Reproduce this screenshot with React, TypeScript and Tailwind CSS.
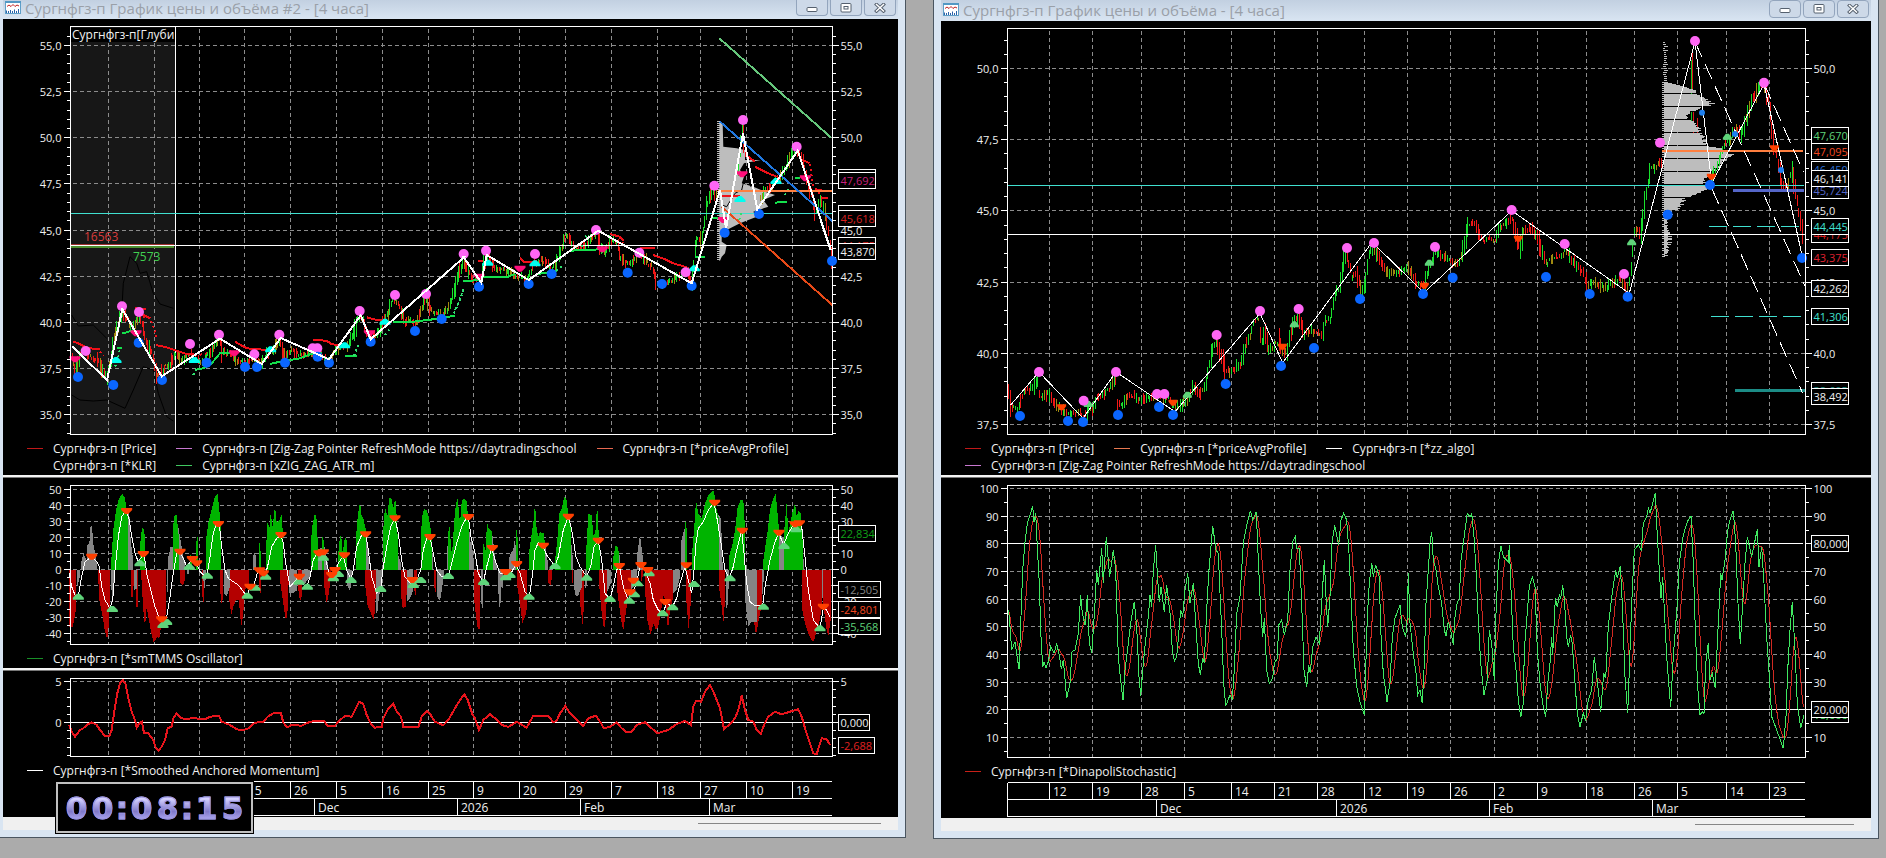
import type { ReactNode } from "react";

/* Traces are stored at three units per pixel, relative to an origin in pixels. */
type Pt = [number, number];
const parse = (ox: number, oy: number, s: string): Pt[] =>
  s.trim().split(/\s+/).map((p) => {
    const [x, y] = p.split(",").map(Number);
    return [ox + x / 3, oy + y / 3];
  });
const join = (p: Pt[]) => p.map(([x, y]) => `${x.toFixed(1)},${y.toFixed(1)}`).join(" ");

function noise(seed: number) {
  let s = seed;
  return () => {
    s = (s * 16807) % 2147483647;
    return s / 2147483647;
  };
}

const PINK = "#ff66f5";
const BLUE = "#0a66ff";
const MAGENTA = "#ff0f7b";
const CYAN = "#00fff0";
const ORANGE = "#ff4000";
const LEAF = "#5fd47a";
const TEAL = "#40e0d0";

function Line({ p, c, w = 1, dash, soft }: { p: Pt[]; c: string; w?: number; dash?: string; soft?: boolean }) {
  return (
    <polyline points={join(p)} fill="none" stroke={c} strokeWidth={w} strokeDasharray={dash}
      shapeRendering={soft ? "auto" : "crispEdges"} />
  );
}

function Dots({ p, c, r = 5 }: { p: Pt[]; c: string; r?: number }) {
  return <g fill={c}>{p.map(([x, y], i) => <circle key={i} cx={x} cy={y} r={r} />)}</g>;
}

function Arrows({ p, c, up, s = 5 }: { p: Pt[]; c: string; up?: boolean; s?: number }) {
  const d = p
    .map(([x, y]) =>
      up
        ? `M${x - s - 0.5} ${y + 3}v-2l${s - 1} -4h3l${s - 1} 4v2z`
        : `M${x - s - 0.5} ${y - 3}v2l${s - 1} 4h3l${s - 1} -4v-2z`)
    .join("");
  return <path d={d} fill={c} />;
}

function Candles({ p, seed, step = 1.7, amp = 9 }: { p: Pt[]; seed: number; step?: number; amp?: number }) {
  const r = noise(seed);
  const out: Record<string, string> = { "#18e02c": "", "#f01818": "", "#a08a10": "" };
  let k = 0;
  for (let x = p[0][0]; x < p[p.length - 1][0]; x += step) {
    while (k < p.length - 2 && p[k + 1][0] < x) k++;
    const [a, b] = [p[k], p[k + 1]];
    const t = (x - a[0]) / Math.max(0.1, b[0] - a[0]);
    const slope = (b[1] - a[1]) / Math.max(1, b[0] - a[0]);
    const y = a[1] + (b[1] - a[1]) * t + (r() - 0.5) * 4;
    const h = 2 + r() * amp * (0.5 + Math.min(1, Math.abs(slope) / 3)) + Math.min(6, Math.abs(slope));
    const q = r() - slope * 0.12;
    const c = q > 0.62 ? "#18e02c" : q < 0.42 ? "#f01818" : "#a08a10";
    out[c] += `M${Math.round(x) + 0.5} ${(y - h / 2).toFixed(1)}v${h.toFixed(1)}`;
  }
  return (
    <g shapeRendering="crispEdges" fill="none">
      {Object.keys(out).map((c) => <path key={c} d={out[c]} stroke={c} />)}
    </g>
  );
}

function Tag({ x, y, w = 37, c, t }: { x: number; y: number; w?: number; c: string; t: string }) {
  return (
    <g>
      <rect x={x} y={y} width={w} height={16} fill="#000" stroke="#fff" shapeRendering="crispEdges" />
      <text x={x + 2} y={y + 12} fill={c} className="text-[11px]">{t}</text>
    </g>
  );
}

type PlotProps = {
  x1: number; x2: number; y1: number; y2: number;
  cols: number[];
  /* first value, last value, spacing of labels and of minor ticks */
  from: number; to: number; step: number; minor: number;
  at: (v: number) => number;
  digits?: number;
  hideGrid?: number[];
  hideRight?: number[];
  children?: ReactNode;
};

function Plot({ x1, x2, y1, y2, cols, from, to, step, minor, at, digits = 0, hideGrid = [], hideRight = [], children }: PlotProps) {
  const major: number[] = [];
  for (let v = from; v <= to + 0.01; v += step) major.push(v);
  const n0 = Math.ceil((from - step) / minor);
  const small: number[] = [];
  for (let n = n0; n * minor < to + step; n++) {
    const y = at(n * minor);
    if (y > y1 + 1 && y < y2 - 1) small.push(y);
  }
  const r = (y: number) => Math.floor(y) + 0.5;
  return (
    <>
      <path fill="none" stroke="#8c8c8c" strokeDasharray="4 3" shapeRendering="crispEdges"
        d={cols.map((x) => `M${x + 0.5} ${y1 + 2}V${y2}`).join("") +
          major.filter((v) => !hideGrid.includes(v)).map((v) => `M${x1 + 2} ${r(at(v))}H${x2}`).join("")} />
      {children}
      <path fill="none" stroke="#fff" shapeRendering="crispEdges"
        d={`M${x1} ${y1}H${x2}V${y2}H${x1}Z` +
          small.map((y) => `M${x1 - 4} ${r(y)}h4M${x2} ${r(y)}h3`).join("") +
          major.map((v) => `M${x1 - 7} ${r(at(v))}h7M${x2} ${r(at(v))}h6`).join("")} />
      <g fill="#f0f0f0" className="text-[11px]">
        {major.map((v) => {
          const t = v.toFixed(digits).replace(".", ",");
          return (
            <g key={v}>
              <text x={x1 - 9} y={r(at(v)) + 4} textAnchor="end">{t}</text>
              {!hideRight.includes(v) && <text x={x2 + 8} y={r(at(v)) + 4}>{t}</text>}
            </g>
          );
        })}
      </g>
    </>
  );
}

type Mark = [number, string];

function DateAxis({ box, x1, x2, y, days, months, label, closed }: {
  box: string; x1: number; x2: number; y: number; days: Mark[]; months: Mark[]; label: string; closed?: boolean;
}) {
  return (
    <svg viewBox={box} className="block w-full font-['Open_Sans','Noto_Sans',sans-serif]" role="img" aria-label={label}>
      <path fill="none" stroke="#fff" shapeRendering="crispEdges"
        d={`M${x1} ${y}H${x2}M${x1} ${y + 17}H${x2}M${x1} ${y + 34}H${x2}` + (closed ? `M${x1} ${y}v34` : "") +
          days.map(([x]) => `M${x + 0.5} ${y}v17`).join("") +
          months.map(([x]) => `M${x + 0.5} ${y + 17}v17`).join("")} />
      <g fill="#f0f0f0" className="text-[12px]">
        {days.map(([x, t]) => <text key={x} x={x + 4} y={y + 13}>{t}</text>)}
        {months.map(([x, t]) => <text key={x} x={x + 4} y={y + 30}>{t}</text>)}
      </g>
    </svg>
  );
}

function Chart({ box, label, children }: { box: string; label: string; children: ReactNode }) {
  return (
    <svg viewBox={box} className="block w-full font-['Open_Sans','Noto_Sans',sans-serif]" role="img" aria-label={label}>
      {children}
    </svg>
  );
}

function Legend({ rows }: { rows: [string, string][][] }) {
  return (
    <div className="pl-6 pb-px">
      {rows.map((row, i) => (
        <div key={i} className="flex h-[17px] items-center gap-5">
          {row.map(([c, t]) => (
            <div key={t} className="flex items-center gap-[10px] whitespace-nowrap">
              <svg width="16" height="1" aria-hidden="true" className="shrink-0"><rect width="16" height="1" fill={c} /></svg>
              <span>{t}</span>
            </div>
          ))}
        </div>
      ))}
    </div>
  );
}

const Divider = () => <div className="h-[3px] border-b border-[#777] bg-[#f4f4f4]" />;

function TitleIcon() {
  return (
    <svg width="16" height="14" viewBox="0 0 16 14" aria-hidden="true" className="shrink-0">
      <rect x=".5" y=".5" width="15" height="12" fill="#fff" stroke="#5f9fc8" />
      <rect x="0" y="0" width="16" height="2" fill="#5298c4" />
      <path d="M2 5.5 4 4l2 1.500 2-2 2 2 2-1.500 2 1" fill="none" stroke="#c02020" />
      <path d="M1.500 12V9.500M3.500 12v-2M5.500 12V9M7.500 12v-2M9.500 12V8.500M11.500 12v-2M13.500 12V8" stroke="#2c62a8" />
    </svg>
  );
}

function Glyph({ kind }: { kind: "min" | "max" | "close" }) {
  return (
    <svg width="12" height="10" viewBox="0 0 12 10" aria-hidden="true">
      {kind === "min" && <rect x="1" y="4.500" width="10" height="4" rx="1" fill="#fff" stroke="#55606e" />}
      {kind === "max" && (
        <g fill="#fff" stroke="#55606e">
          <rect x="1" y=".5" width="10" height="8.500" rx="1" />
          <rect x="4" y="3.500" width="4" height="2.500" />
        </g>
      )}
      {kind === "close" && (
        <g strokeLinecap="square">
          <path d="M2.500 1.500l7 6.500M9.500 1.500l-7 6.500" stroke="#55606e" strokeWidth="3.400" />
          <path d="M2.500 1.500l7 6.500M9.500 1.500l-7 6.500" stroke="#fff" strokeWidth="1.500" />
        </g>
      )}
    </svg>
  );
}

const BTN = "flex w-8 items-center justify-center border border-[#93a5bd] bg-[#cdd9e8]";

function Buttons({ cls }: { cls: string }) {
  return (
    <div className="ml-auto flex gap-[2px] self-start">
      <button aria-label="Свернуть" className={`${BTN} ${cls}`}><Glyph kind="min" /></button>
      <button aria-label="Развернуть" className={`${BTN} ${cls}`}><Glyph kind="max" /></button>
      <button aria-label="Закрыть" className={`${BTN} ${cls}`}><Glyph kind="close" /></button>
    </div>
  );
}

/* ---------- left window ---------- */

const LC = [108, 154, 199, 244, 290, 336, 382, 428, 473, 519, 565, 611, 657, 700, 746, 792];

const A = (s: string) => parse(0, 0, s);
const B = (s: string) => parse(440, 0, s);
const C = (s: string) => parse(0, 430, s);
const D = (s: string) => parse(440, 470, s);

const leftPrice = [
  ...A("215,1075 225,1110 240,1060 255,1060 275,1075 290,1075 305,1110 320,1130 330,1090 340,1020 355,970 367,935 380,960 395,985 410,960 420,950 430,990 440,1030 455,1060 468,1120 480,1125 495,1100 510,1095 525,1060 545,1080 570,1060 590,1080 610,1085 640,1040 660,1020 665,1055 690,1060 710,1080 735,1085 760,1080 785,1085 800,1060 820,1050 838,1020 850,1070 870,1050 890,1060 915,1065 945,1055 965,1070 985,1080 1000,1060 1020,1040 1040,1040 1060,1000 1078,945 1090,965 1100,1000 1112,1015 1130,1000 1150,960 1165,940 1175,895 1190,905 1205,940 1215,965 1230,960 1245,970 1260,940 1278,890 1290,930 1310,940 1330,945 1350,910 1365,860 1375,820"),
  ...B("65,800 72,775 80,810 100,840 120,840 130,790 140,760 155,790 170,810 190,810 210,815 230,830 250,830 265,835 280,790 300,780 320,790 335,810 345,790 360,760 372,710 385,710 400,740 420,745 440,730 455,710 470,700 480,740 495,755 510,725 530,725 540,770 555,790 575,785 595,765 615,780 635,800 650,850 670,850 700,840 720,825 740,815 755,845 765,740 770,720 780,725 790,690 800,610 820,570 830,600"),
];
const leftPriceEnd = B("960,600 975,570 990,560 1005,540 1020,530 1040,490 1055,460 1070,450 1085,480 1100,540 1115,590 1125,640 1140,600 1155,640 1165,700 1175,780");

const redBits = [
  ...["220,1025 235,1030 265,1045 300,1047", "405,925 438,928", "420,940 450,955", "468,1035 500,1042 560,1062 590,1064", "705,1025 740,1045 800,1050", "940,1020 980,1022 995,1033 1020,1035", "1100,952 1130,960 1160,962"].map(A),
  ...["115,783 130,783", "240,772 250,785 280,785", "510,702 540,710 550,722", "600,745 645,745", "640,765 680,780 700,790 740,802", "945,500 985,520 1010,530", "918,465 945,485", "845,588 900,588", "1090,480 1108,490", "1125,568 1155,573 1175,573", "1145,595 1165,595"].map(B),
];
const greenBits = [
  ...["365,1000 380,997 400,990", "350,1045 365,1045", "585,1110 610,1105 635,1090 660,1060 690,1058", "810,1092 840,1085 900,1075 930,1063 965,1058", "1035,1068 1070,1068", "1180,967 1240,965 1300,958 1365,947"].map(A),
  ...["70,843 130,840", "130,832 200,832 225,822", "290,823 335,815 350,812", "390,752 480,748", "765,770 795,770", "815,655 845,655", "1005,608 1040,605", "1065,535 1080,535"].map(B),
];
const greenDots = [
  ...["345,1100 352,1085 360,1045", "580,1125 590,1105", "1062,1068 1072,1040 1082,1028", "1155,1005 1168,990", "1362,940 1375,910 1390,868"].map(A),
  ...["45,930 58,905 72,865", "335,820 372,795", "425,740 440,705", "898,660 905,630", "1035,585 1050,560"].map(B),
];
const redDots = [
  ...["430,950 450,955 462,985 468,1010", "300,1055 312,1065", "600,1064 620,1060"].map(A),
  ...["1085,478 1110,490 1118,555 1145,590", "540,712 552,735"].map(B),
];

/* Histogram areas; every one closes on the zero line. */
const bars: [string, string[], string[]][] = [
  ["#b40000", ["208,590 218,590 228,540", "276,440 277,440", "294,430 298,510 308,560 314,600 322,628 326,590 330,520", "393,500 400,500 401,440", "407,530 413,530", "424,440 430,540 435,590 440,530 445,560 452,600 460,635 466,630 472,620 478,625 482,595 490,570 498,550", "541,460 549,468 555,450", "605,480 609,515 613,515", "660,480 666,530 670,480", "686,500 694,555 700,530 708,510 716,510 724,590 730,550 735,480 748,460", "776,480 783,490 784,440", "840,450 850,520 858,575 863,540 866,450", "893,465 900,515 905,500", "973,470 980,520 985,500 992,450", "1095,460 1103,530 1113,550 1122,572 1127,500", "1202,490 1208,535 1218,530 1222,440", "1242,470 1246,500 1250,470", "1302,440 1304,485 1307,485", "1421,490 1430,570 1440,600"],
    ["0,350 7,345 10,320", "101,380 112,470 118,480 121,350", "232,350 240,400 247,460 255,440 262,410", "325,340 332,345 336,320", "395,340 399,340", "420,400 428,465 432,400", "478,350 485,430 492,480 498,440 502,340", "530,350 538,410 545,460 550,480 557,430 565,380 575,370", "604,335 608,320", "615,360 622,450 632,495 640,460 648,480 655,470 660,440 672,370 680,440 684,480 690,420 700,380", "738,380 746,480 752,400", "838,360 844,400 850,460 856,380", "940,440 948,495 958,440 967,400", "1087,420 1095,460 1105,490 1115,510 1122,515 1130,480 1140,450 1145,400", "1150,400 1158,470 1165,500 1172,450"]],
  ["#858585", ["232,470 240,440", "243,400 250,370 260,390 262,345 268,340 272,283 276,290 280,340 285,370 292,410", "333,470 338,500 343,430", "384,250 388,250 392,330 400,395", "402,480 412,475", "500,500 505,470", "505,380 512,350 520,350", "535,290 545,350 555,405", "560,435 567,430", "596,370 600,410", "610,440 612,485 618,440", "672,490 680,500 690,470", "760,375 766,365 768,400", "868,490 880,490 892,480", "906,465 915,460 930,440", "950,360 975,350 985,410", "1040,460 1050,485 1055,450", "1095,290 1108,400", "1127,550 1132,550 1137,500 1145,450", "1193,370 1203,400", "1220,515 1230,505 1240,480", "1294,320 1300,400", "1312,500 1320,513 1327,470 1331,440", "1340,380 1345,320 1350,400", "1405,270 1412,340 1422,400"],
    ["0,385 2,360", "93,200 103,285", "122,380 126,415 130,415", "156,185 165,260 172,290", "173,330 178,410 181,410 184,350 190,355", "207,265 212,250 220,240 225,200 228,250", "314,215 325,285", "388,160 400,280", "401,350 408,380 415,375 427,350", "436,355 440,345", "500,370 512,340", "536,235 543,290", "572,360 590,340", "590,260 595,230 600,195 605,235 612,290", "700,370 710,360 720,320", "722,220 730,190 735,170 740,280", "832,130 843,145 848,290", "858,415 862,415 868,320", "914,380 925,470 935,455 950,455", "967,380 972,320", "1016,180 1025,200 1033,200", "1084,170 1092,290", "1145,385 1150,385"]],
  ["#00b400", ["333,405 340,300 348,240 354,215 360,200 368,193 375,205 380,240 384,260", "419,370 422,325 426,293 432,300 436,330", "519,290 524,255 530,255 535,310 537,320", "569,370 576,380", "588,370 590,320 593,320 595,400", "618,330 625,280 632,250 638,225 645,200 653,193 658,240 663,290", "776,340 780,340 782,370", "797,370 803,270 808,300 812,250 818,290 825,225 830,280 838,270 845,255 850,330", "933,330 938,280 945,250 950,270 954,350", "966,320 970,320 972,350", "1015,370 1020,318 1024,318 1028,370 1035,320 1040,330", "1068,320 1073,260 1080,215 1085,260 1090,265 1098,300", "1148,320 1155,230 1162,260 1168,205 1174,203 1180,235 1186,205 1190,260 1195,360", "1262,330 1266,260 1272,237 1280,240 1286,260 1294,310 1296,370", "1344,310 1350,285 1353,370 1358,350 1362,280 1368,220 1373,205 1380,280 1385,215 1392,205 1400,215 1408,300"],
    ["130,220 137,240 141,155 146,175 155,185 158,240", "227,180 232,180 234,250", "268,240 275,190 281,150 285,98 290,180 295,200 300,185 306,190 312,190 316,240", "345,270 352,210 358,130 365,115 373,80 380,90 384,130 390,140 394,220", "438,250 445,132 455,135 460,195 466,190 470,122 474,125 476,200 480,260", "520,260 527,225 533,230 537,250", "735,155 739,155 741,220", "757,240 763,170 768,92 775,130 785,145 795,100 805,75 820,60 825,80 830,120 838,150", "867,260 878,220 885,180 893,110 902,90 910,88 914,160", "970,270 982,190 990,120 998,90 1007,72 1012,120 1017,180", "1032,190 1040,95 1045,190 1052,150 1058,125 1065,100 1070,140 1075,123 1083,130 1088,220"]],
];
const area = (p: Pt[]) => `M${p[0][0].toFixed(1)} 569.5L${join(p)} ${p[p.length - 1][0].toFixed(1)} 569.5Z`;

const oscLine = [
  ...C("208,430 215,470 225,495 235,500 243,450 255,395 275,380 290,395 298,410 305,470 315,510 330,535 338,510 345,420 355,320 365,260 378,240 388,270 395,320 405,370 415,395 425,380 432,370 440,430 450,470 465,530 480,570 490,580 500,560 510,500 520,430 530,370 540,365 550,385 560,410 575,390 590,400 600,425 615,440 622,430 630,380 640,310 650,280 658,285 665,350 675,420 685,445 700,455 715,465 730,485 742,497 750,470 760,470 775,420 785,430 795,440 805,400 815,350 830,325 843,315 850,340 857,400 870,470 880,460 895,440 905,460 920,470 930,440 940,390 950,370 970,370 980,400 990,440 1000,440 1015,400 1030,378 1040,420 1052,448 1060,420 1070,350 1085,315 1097,313 1105,360 1115,440 1130,490 1142,475 1150,410 1160,350 1172,290 1185,265 1195,310 1205,390 1215,440 1235,465 1250,450 1262,420 1270,360 1280,325 1290,320 1300,370 1310,420 1325,440 1345,438 1355,400 1370,340 1385,290 1400,262"),
  ...D("85,140 93,200 105,250 115,310 130,337 140,290 155,234 165,270 180,310 195,310 210,315 228,283 240,310 255,365 268,380 278,310 285,240 295,218 308,228 320,255 345,288 355,260 370,180 385,140 395,180 408,260 420,290 440,320 452,290 462,230 475,212 485,270 495,370 510,387 520,350 530,300 538,287 550,350 565,392 575,370 590,340 600,287 615,300 630,340 640,390 655,420 668,430 680,400 697,410 710,385 720,340 735,290 745,330 755,370 762,300 768,220 775,175 790,155 805,120 822,98 832,150 840,200 855,300 868,325 880,290 890,240 905,182 912,250 920,340 930,395 945,407 968,408 975,350 990,270 1005,215 1017,188 1030,225 1045,190 1060,165 1075,160 1085,170 1095,260 1105,360 1120,450 1140,475 1150,415 1160,420 1170,440"),
];
const oscDown = [
  ...C("380,243 275,380 430,372 540,365 485,568 577,387 590,400 655,282 750,470 778,421 790,430 843,315 898,440 957,370 970,367 1005,420 995,435 1033,376 1097,313 1185,265 1237,450 1290,321 1405,261"),
  ...D("157,234 197,306 230,282 310,227 385,140 475,212 538,288 570,367 580,332 603,285 623,300 676,396 739,286 824,98 907,182 1017,188 1065,163 1078,160 1150,410"),
];
const oscUp = [
  ...C("235,500 337,537 420,400 500,576 489,585 568,410 622,437 742,497 765,473 797,440 922,470 897,455 970,383 1000,445 1015,432 1053,450 1142,477 1240,465 1262,450 1345,438"),
  ...D("131,336 197,322 210,315 267,380 345,288 440,323 510,387 568,392 583,373 592,340 627,310 668,430 698,412 762,342 870,325 970,410 1032,228 1068,178 1140,475"),
];
const momentum = [
  ...C("208,885 215,905 225,920 240,900 250,895 260,885 275,877 290,885 300,900 315,918 328,918 335,900 342,850 352,790 360,760 368,750 376,760 385,805 395,845 405,870 410,893 418,880 426,875 432,910 445,910 460,930 468,955 475,962 485,950 495,930 503,895 515,890 520,865 530,850 545,865 560,868 580,863 600,868 615,868 630,860 657,858 665,875 690,885 710,898 730,901 745,895 765,878 790,875 803,860 820,850 843,850 850,878 862,892 875,885 905,887 930,875 960,872 972,872 982,887 1005,887 1020,870 1035,858 1055,860 1065,840 1078,815 1090,822 1100,855 1112,880 1125,893 1145,890 1150,865 1165,835 1180,820 1190,845 1203,860 1210,890 1255,892 1265,860 1280,843 1290,852 1305,875 1330,886 1345,870 1365,835 1380,810 1393,793"),
  ...D("83,690 98,735 105,745 117,780 130,750 150,733 165,745 185,765 205,771 230,755 260,773 270,755 280,737 325,737 340,757 350,752 360,730 376,708 390,730 410,750 430,768 445,745 468,737 480,755 492,775 510,770 530,757 545,775 560,787 575,785 590,765 615,757 630,770 652,790 685,780 710,762 735,753 753,765 760,710 768,693 783,695 795,665 810,645 820,665 830,690 840,715 852,777 870,762 885,745 895,720 905,677 915,720 925,750 940,755 950,780 962,792 972,765 985,740 1005,725 1025,733 1050,725 1075,718 1085,740 1095,775 1105,805 1120,850 1130,852 1145,805 1160,808 1170,825"),
];

function LeftPrice() {
  const teeth: string[] = [];
  for (let y = 121; y < 260; y += 2) teeth.push(`M717 ${y + 0.5}h3`);
  return (
    <Chart box="3 19 895 421" label="Цена, Сургнфгз-п">
      <rect x="71" y="27" width="104" height="407" fill="#171717" />
      <g fill="none" stroke="#000" strokeWidth="1">
        <polyline points={join(A("366,920 370,850 390,770 410,790 420,820 440,815 460,880 480,912 520,925"))} />
        <polyline points={join(A("215,945 235,978 280,975 320,1015"))} />
        <polyline points={join(A("215,1185 240,1200 280,1203 320,1200 375,1225 400,1170 430,1100 460,1110 475,1180 500,1250 520,1263"))} />
      </g>
      <Plot x1={70.5} x2={832.5} y1={26.5} y2={434.5} cols={LC} from={35} to={55} step={2.5} minor={0.5} digits={1}
        hideRight={[47.5]} at={(v) => 45.5 + (55 - v) * 18.46}>
        <rect x="71" y="28" width="104" height="14" fill="#000" />
        <clipPath id="depth"><rect x="71" y="27" width="103" height="20" /></clipPath>
        <text x="72" y="39" fill="#f0f0f0" className="text-[12px]" clipPath="url(#depth)">Сургнфгз-п[Глубин</text>
        <path d="M175.500 27V434M70.500 27V434" stroke="#fff" shapeRendering="crispEdges" />
        <Candles p={leftPrice} seed={77} step={1.4} amp={11} />
        <polygon fill="#bdbdbd" points={join(B("838,362 848,375 850,440 890,445 915,450 915,480 962,480 912,490 900,510 912,530 905,550 940,560 975,575 1005,585 970,600 985,620 940,635 950,650 900,670 860,690 845,700 845,725 860,735 855,760 845,770 840,782 838,782"))} />
        <path d={teeth.join("")} stroke="#bdbdbd" shapeRendering="crispEdges" />
        <polyline fill="none" stroke="#000" points={join(B("845,615 860,620 885,580 905,570 912,540 930,545 932,560"))} />
        <Candles p={leftPriceEnd} seed={412} amp={11} />
        <Candles p={B("895,500 900,440 907,385 912,430 918,480")} seed={5} amp={14} />
        <path d="M71 213.500H832" stroke={TEAL} shapeRendering="crispEdges" />
        <path d="M71 244.500H174" stroke="#a03030" strokeWidth="2" shapeRendering="crispEdges" />
        <path d="M71 247H174" stroke="#4f9030" strokeWidth="2" shapeRendering="crispEdges" />
        <path d="M71 245.500H832" stroke="#fff" shapeRendering="crispEdges" />
        <text x="84" y="241" fill="#d83c3c" className="text-[12px]">16563</text>
        <text x="133" y="261" fill="#40d050" className="text-[12px]">7573</text>
        {redBits.map((p, i) => <Line key={i} p={p} c="#f01018" w={2} />)}
        {greenBits.map((p, i) => <Line key={i} p={p} c="#14e04c" w={2} />)}
        {greenDots.map((p, i) => <Line key={i} p={p} c="#30e070" w={2} dash="2 3" />)}
        {redDots.map((p, i) => <Line key={i} p={p} c="#f01018" w={2} dash="2 3" />)}
        <Arrows c={MAGENTA} p={[...A("225,1078 408,1000 703,1060 1108,1000"), ...B("117,830 240,806 487,748 850,660 906,523 1096,535")]} />
        <Arrows c={CYAN} up p={[...A("348,1080 583,1080 812,1048 1034,1036 1155,965"), ...B("143,788 285,790 763,805 900,597 1008,543")]} />
        <Dots c={PINK} p={[...A("257,1053 366,919 417,936 570,1032 657,1004 763,1063 838,1004 938,1045 952,1045 1079,933 1185,885 1278,882"), ...B("71,762 138,752 285,762 468,690 598,758 737,817 823,557 909,360 1070,440")]} />
        <Dots c={BLUE} p={[...A("234,1131 340,1155 416,1028 486,1140 620,1088 735,1101 771,1101 855,1088 953,1070 987,1088 1112,1025 1245,993 1325,957"), ...B("117,860 266,852 335,822 563,818 666,852 755,857 854,698 957,642")]} />
        <Line p={B("835,572 1177,572")} c="#ff7f3f" w={2} />
        <Line p={B("838,115 1172,412")} c="#66c87c" w={2} />
        <Line p={B("840,365 1177,663")} c="#2078e0" w={2} />
        <Line p={B("845,620 1177,915")} c="#e84a18" w={2} />
        <Line w={2} c="#fff" p={[...A("217,1040 321,1140 367,928 485,1129 660,1016 785,1092 842,1014 987,1078 1082,946 1112,1018 1392,772"), ...B("71,772 124,848 140,765 266,840 475,692 755,850 840,570 858,685 909,400 952,628 1073,452 1172,750")]} />
      </Plot>
      <Dots c={BLUE} p={B("1176,783")} />
      <g>
        <Tag x={838.5} y={169.5} c="#c01878" t="" />
        <Tag x={838.5} y={172.5} c="#c8207c" t="47,692" />
        <Tag x={838.5} y={205.5} c={TEAL} t="45,900" />
        <Tag x={838.5} y={210.5} c="#d82020" t="45,618" />
        <Tag x={838.5} y={237.5} c="#d82020" t="44,175" />
        <Tag x={838.5} y={243.5} c="#f0f0f0" t="43,870" />
      </g>
    </Chart>
  );
}

function LeftOscillator() {
  return (
    <Chart box="3 478 895 172" label="smTMMS Oscillator">
      <Plot x1={70.5} x2={832.5} y1={485.5} y2={644.5} cols={LC} from={-40} to={50} step={10} minor={5}
        hideRight={[20, -30]} at={(v) => 569.5 - v * 1.6}>
        {bars.map(([c, l, r]) => (
          <path key={c} fill={c} shapeRendering="crispEdges" d={[...l.map(C), ...r.map(D)].map(area).join("")} />
        ))}
        <Line p={oscLine} c="#fff" />
        <Arrows p={oscUp} c={LEAF} up />
        <Arrows p={oscDown} c={ORANGE} />
      </Plot>
      <Tag x={838.5} y={525.5} c="#10a018" t="22,834" />
      <Tag x={838.5} y={581.5} w={42} c="#858585" t="-12,505" />
      <Tag x={838.5} y={601.5} w={42} c="#f04820" t="-24,801" />
      <Tag x={838.5} y={618.5} w={42} c={LEAF} t="-35,568" />
    </Chart>
  );
}

function LeftMomentum() {
  return (
    <Chart box="3 671 895 91" label="Smoothed Anchored Momentum">
      <Plot x1={70.5} x2={832.5} y1={678.5} y2={756.5} cols={LC} from={0} to={5} step={5} minor={1}
        hideGrid={[0]} hideRight={[0]} at={(v) => 722.5 - v * 8.2}>
        <path d="M71 722.500H832" stroke="#fff" shapeRendering="crispEdges" />
        <Line p={momentum} c="#e8141c" w={2} />
      </Plot>
      <Tag x={838.5} y={714.5} w={31} c="#f0f0f0" t="0,000" />
      <Tag x={838.5} y={737.5} w={36} c="#e02020" t="-2,688" />
    </Chart>
  );
}

/* ---------- right window ---------- */

const RC = [1049, 1092, 1141, 1184, 1231, 1274, 1317, 1364, 1407, 1450, 1494, 1537, 1586, 1634, 1677, 1726, 1769];

const E = (s: string) => parse(920, 0, s);
const F = (s: string) => parse(1400, 0, s);
const G = (s: string) => parse(920, 470, s);
const H = (s: string) => parse(1400, 470, s);

const rightPrice = [
  ...E("265,1180 272,1220 290,1225 305,1190 320,1170 340,1165 352,1140 357,1190 370,1190 385,1180 400,1210 420,1225 440,1240 460,1240 480,1235 490,1250 505,1225 515,1230 530,1190 550,1180 570,1160 585,1130 592,1215 605,1215 620,1190 640,1185 660,1205 680,1195 700,1190 720,1190 745,1195 760,1220 780,1215 800,1195 820,1160 840,1180 855,1160 865,1100 875,1050 888,1030 900,1060 915,1110 935,1115 960,1090 975,1040 990,1010 1000,960 1015,960 1022,1030 1035,1000 1045,1050 1060,1040 1075,1020 1085,1050 1100,1060 1110,1000 1125,960 1135,950 1150,1000 1170,990 1185,1000 1205,1005 1215,960 1230,960 1245,880 1255,870 1270,780 1280,765 1295,830 1310,825 1325,880 1335,850 1345,760 1360,750 1375,775 1390,805 1410,820 1430,820 1445,815"),
  ...F("20,800 35,820 50,850 70,860 85,800 105,760 125,770 150,780 175,795 190,740 205,670 220,670 235,700 250,725 265,715 285,720 300,680 320,665 335,655 345,700 360,740 370,690 390,685 410,705 425,760 440,790 460,770 480,770 495,750 515,780 535,800 550,820 560,860 580,840 600,860 620,860 640,845 665,835 680,870 690,830 700,700 710,690 720,705 735,600 750,510 765,500 780,480 788,500"),
];
const rightPriceEnd = F("930,530 950,500 970,440 985,420 1005,390 1020,410 1040,350 1055,300 1075,260 1092,260 1105,310 1118,430 1130,470 1145,560 1160,560 1175,510 1190,600 1205,690 1208,720");

const profileShape = F("805,245 850,258 890,270 905,290 942,308 915,320 872,335 862,355 895,370 905,390 915,410 920,435 975,445 1000,465 975,480 955,500 940,520 912,540 930,560 895,580 855,595 850,615 815,640 800,655 797,680 815,710 806,740 797,770");

function profile() {
  const r = noise(31);
  const rows: string[] = [];
  for (let y = 42; y < 82; y += 2) rows.push(`M${1663 + Math.round(r() * 1)} ${y + 0.5}h${2 + Math.round(r() * 3)}`);
  let k = 0;
  for (let y = 82; y < 257; y += 1) {
    while (k < profileShape.length - 2 && profileShape[k + 1][1] < y) k++;
    const [a, b] = [profileShape[k], profileShape[k + 1]];
    const t = Math.min(1, Math.max(0, (y - a[1]) / (b[1] - a[1])));
    const x = a[0] + (b[0] - a[0]) * t;
    if (y > 88 && y < 215 && (y - 93) % 13 === 0) continue;
    if (y > 215 && y % 3 === 0) { rows.push(`M1664 ${y + 0.5}h4`); continue; }
    const x0 = y % 2 ? 1664 : 1662;
    rows.push(`M${x0} ${y + 0.5}H${Math.round(Math.max(x0 + 3, x - r() * 6 + 2))}`);
  }
  return rows.join("");
}

const fast = [
  ...G("265,420 268,440 275,540 285,515 297,598 300,520 308,300 315,215 322,160 330,135 338,108 342,155 347,130 352,230 358,340 363,500 368,590 372,575 378,595 385,575 392,530 402,550 410,522 418,555 424,598 430,570 440,685 450,640 456,545 465,540 475,490 482,375 487,430 495,465 502,375 508,520 515,550 520,480 525,400 530,300 535,345 545,235 550,340 559,200 569,320 580,240 587,300 595,560 603,640 609,690 615,600 625,520 632,460 643,395 650,470 657,620 662,678 670,580 678,500 685,440 690,375 695,410 700,300 707,225 713,330 718,395 723,350 733,425 740,345 750,430 757,540 763,573 770,560 775,505 782,420 788,440 795,360 803,310 810,400 820,340 826,440 835,580 841,615 848,565 853,580 860,420 866,310 872,240 878,168 888,240 895,250 900,370 905,480 911,640 917,708 930,675 937,690 943,600 950,430 960,380 970,220 980,165 991,122 998,150 1009,125 1015,270 1022,420 1028,500 1033,445 1040,600 1048,640 1058,625 1063,580 1072,565 1076,465 1085,450 1093,495 1103,450 1110,300 1118,215 1126,200 1130,235 1138,235 1145,400 1152,600 1160,652 1166,585 1171,610 1178,530 1188,500 1198,520 1205,400 1213,270 1218,380 1223,470 1230,380 1236,220 1244,165 1256,225 1263,150 1271,130 1280,150 1287,250 1295,430 1300,540 1310,650 1320,695 1333,735 1337,600 1342,440 1348,340 1355,278 1360,320 1367,285 1378,320 1382,480 1390,610 1401,695 1410,640 1417,500 1425,445 1440,405 1447,470 1457,500 1462,440"),
  ...H("25,310 30,460 40,550 48,610 53,675 60,660 67,700 72,600 78,400 85,300 90,220 95,185 100,270 108,300 115,350 125,400 133,480 138,498 145,455 152,480 160,525 165,440 172,395 178,390 183,270 190,220 202,130 210,140 215,130 222,200 228,300 235,450 242,580 252,675 262,630 268,480 275,520 283,630 288,430 295,280 303,228 310,260 325,275 328,225 333,360 340,530 348,600 355,690 362,742 370,700 373,540 380,450 388,350 397,320 405,350 412,540 420,640 428,700 437,742 443,640 450,580 455,500 458,555 466,385 472,410 478,375 482,385 488,345 493,385 500,500 505,530 512,495 517,520 525,640 532,730 540,770 550,730 557,752 565,690 575,660 583,560 590,620 602,725 611,610 617,625 625,470 635,380 647,300 652,325 661,288 667,400 675,620 683,730 688,600 695,400 703,240 715,225 724,240 730,160 740,140 745,115 750,130 766,70 772,200 778,300 783,385 788,320 792,400 800,560 806,640 812,710 820,560 826,480 832,400 838,280 850,195 862,155 873,138 880,280 886,480 893,650 900,735 907,725 912,730 917,580 925,520 930,630 937,610 946,655 952,520 958,400 962,310 966,330 975,270 983,180 990,150 1000,122 1007,220 1014,400 1021,522 1028,400 1035,280 1042,200 1055,260 1072,178 1077,290 1085,230 1092,340 1100,500 1108,620 1115,740 1130,780 1150,835 1158,740 1163,600 1170,480 1177,395 1185,540 1192,700 1202,775 1212,735"),
];

/* Signal line: trailing average of the fast line. */
function trailing(p: Pt[], span: number): Pt[] {
  const ys: number[] = [];
  let k = 0;
  for (let x = p[0][0]; x < p[p.length - 1][0]; x += 1) {
    while (k < p.length - 2 && p[k + 1][0] < x) k++;
    const [a, b] = [p[k], p[k + 1]];
    ys.push(a[1] + ((b[1] - a[1]) * (x - a[0])) / (b[0] - a[0]));
  }
  return ys.map((_, i) => {
    const part = ys.slice(Math.max(0, i - span + 1), i + 1);
    return [p[0][0] + i, part.reduce((s, v) => s + v, 0) / part.length];
  });
}
const slow = trailing(fast, 9);

function RightPrice() {
  return (
    <Chart box="941 21 930 419" label="Цена, Сургнфгз-п, профиль">
      <Plot x1={1007.5} x2={1805.5} y1={28.5} y2={434.5} cols={RC} from={37.5} to={50} step={2.5} minor={0.5} digits={1}
        hideRight={[47.5]} at={(v) => 68.5 + (50 - v) * 28.48}>
        <Candles p={rightPrice} seed={991} amp={13} />
        <path d="M1691.500 60v34M1691.500 112v16" stroke="#18c020" shapeRendering="crispEdges" />
        <path d="M1692.500 50v40M1693.500 112v22M1697.500 118v26" stroke="#e01818" shapeRendering="crispEdges" />
        <path d={profile()} stroke="#bdbdbd" shapeRendering="crispEdges" />
        <Candles p={rightPriceEnd} seed={63} amp={14} />
        <path d="M1008 185.500H1804" stroke={TEAL} shapeRendering="crispEdges" />
        <path d="M1008 234.500H1805" stroke="#fff" shapeRendering="crispEdges" />
        <Line p={F("787,453 1209,453")} c="#ff7f3f" w={2} />
        <Line p={F("998,571 1212,571")} c="#5566c8" w={3} />
        <Line p={F("1004,1171 1218,1171")} c="#1c8c86" w={3} />
        <Line p={F("928,679 1205,679")} c={TEAL} dash="18 6" />
        <Line p={F("933,949 1205,949")} c={TEAL} dash="18 6" />
        <Line p={F("885,125 1216,860")} c="#fff" dash="17 7" />
        <Line p={F("1092,250 1210,515")} c="#fff" dash="17 7" />
        <Line p={F("935,565 1208,1180")} c="#fff" dash="17 7" />
        <Line c="#fff" p={[...E("272,1215 357,1116 489,1255 588,1116 765,1235 1020,940 1088,1088 1350,735 1362,732"), ...F("72,878 335,632 688,880 885,125 935,550 1092,252 1206,765")]} />
        <Arrows c={ORANGE} s={4} p={[...E("425,1222 759,1208 1087,1040"), ...F("73,857 355,716 934,530 1123,445")]} />
        <Arrows c={LEAF} s={4} up p={[...E("505,1212 802,1184 1123,973"), ...F("88,788 695,727 982,410")]} />
        <Dots c={PINK} p={[...E("357,1116 491,1202 588,1116 711,1182 733,1182 890,1005 1020,933 1136,927 1281,744 1362,729"), ...F("105,741 335,630 494,732 672,822 780,428 885,123 1092,248")]} />
        <Dots c={BLUE} p={[...E("300,1248 444,1263 489,1266 594,1245 717,1221 759,1245 917,1152 1083,1098 1182,1044 1320,897"), ...F("69,882 158,833 438,831 569,882 683,890 803,644 930,555 1206,774")]} />
        <Dots c="#1e80f0" r={3} p={F("906,338 1005,402 1143,510")} />
      </Plot>
      <Tag x={1811.5} y={127.5} c={LEAF} t="47,670" />
      <Tag x={1811.5} y={143.5} c="#f04820" t="47,095" />
      <Tag x={1811.5} y={161.5} c="#2f6fd0" t="46,450" />
      <Tag x={1811.5} y={182.5} c="#5566c8" t="45,724" />
      <Tag x={1811.5} y={170.5} c="#f0f0f0" t="46,141" />
      <Tag x={1811.5} y={226.5} c="#d82020" t="44,175" />
      <Tag x={1811.5} y={218.5} c={TEAL} t="44,445" />
      <Tag x={1811.5} y={249.5} c="#e02030" t="43,375" />
      <Tag x={1811.5} y={280.5} c="#f0f0f0" t="42,262" />
      <Tag x={1811.5} y={308.5} c={TEAL} t="41,306" />
      <Tag x={1811.5} y={382.5} c="#1c8c86" t="38,605" />
      <Tag x={1811.5} y={388.5} c="#f0f0f0" t="38,492" />
    </Chart>
  );
}

function RightStochastic() {
  return (
    <Chart box="941 478 930 285" label="DinapoliStochastic">
      <Plot x1={1007.5} x2={1805.5} y1={485.5} y2={757.5} cols={RC} from={10} to={100} step={10} minor={5}
        hideGrid={[20, 80]} hideRight={[20, 80]} at={(v) => 488.5 + (100 - v) * 2.768}>
        <path d="M1008 543.500H1803M1008 709.500H1805" stroke="#fff" shapeRendering="crispEdges" />
        <Line p={slow} c="#d02a22" />
        <Line p={fast} c="#3fe860" />
      </Plot>
      <Tag x={1811.5} y={535.5} c="#f0f0f0" t="80,000" />
      <Tag x={1811.5} y={706.5} c="#3fe860" t="18,000" />
      <Tag x={1811.5} y={701.5} c="#f0f0f0" t="20,000" />
    </Chart>
  );
}

/* ---------- page ---------- */

const BODY = "bg-black text-[12px] leading-[17px] text-[#f0f0f0]";

export default function App() {
  return (
    <div className="min-h-screen overflow-hidden bg-[#ababab] font-['Open_Sans','Noto_Sans',sans-serif]">
      <main className="grid grid-cols-[minmax(0,906fr)_minmax(0,946fr)] items-start gap-[27px] pr-[7px]">
        <section className="relative border-r border-b border-[#4a5560] bg-[#d9e5f2] pr-[7px] pb-[7px] pl-[3px]">
          <header className="flex h-[19px] items-center gap-1 bg-linear-to-b from-[#c2d0e1] to-[#d9e5f2] pl-[2px] pr-[2px] pb-[3px]">
            <TitleIcon />
            <h1 className="text-[15px] leading-4 whitespace-nowrap text-[#9aa0a8]">Сургнфгз-п График цены и объёма #2 - [4 часа]</h1>
            <Buttons cls="h-4 rounded-b-sm border-t-0" />
          </header>
          <div className={BODY}>
            <LeftPrice />
            <Legend rows={[
              [["#c01818", "Сургнфгз-п [Price]"], ["#c878d0", "Сургнфгз-п [Zig-Zag Pointer RefreshMode https://daytradingschool"], ["#e86850", "Сургнфгз-п [*priceAvgProfile]"]],
              [["#000000", "Сургнфгз-п [*KLR]"], ["#40c860", "Сургнфгз-п [xZIG_ZAG_ATR_m]"]],
            ]} />
            <Divider />
            <LeftOscillator />
            <Legend rows={[[["#189028", "Сургнфгз-п [*smTMMS Oscillator]"]]]} />
            <Divider />
            <LeftMomentum />
            <Legend rows={[[["#ffffff", "Сургнфгз-п [*Smoothed Anchored Momentum]"]]]} />
            <DateAxis box="3 780 895 37" x1={70.5} x2={832} y={781.5} label="Даты"
              days={[[244, "15"], [290, "26"], [336, "5"], [382, "16"], [428, "25"], [473, "9"], [519, "20"], [565, "29"], [611, "7"], [657, "18"], [700, "27"], [746, "10"], [792, "19"]]}
              months={[[314, "Dec"], [457, "2026"], [580, "Feb"], [709, "Mar"]]} />
          </div>
          <div className="flex h-[13px] items-center justify-end bg-[#f0f0f0] pr-[17px]">
            <div className="h-px w-[183px] bg-[#868686]" />
          </div>
          <div role="timer" aria-label="00:08:15"
            className="absolute bottom-[3px] left-[55px] border border-black bg-black">
            <div className="flex h-[51px] w-[197px] items-center justify-center border-2 border-[#c0c0c0]">
              {"00:08:15".split("").map((ch, i) => (
                <span key={i}
                  className={`bg-linear-to-b from-[#d4d0ff] from-25% via-[#8078c8] via-60% to-[#aaa4ee] to-80% bg-clip-text text-center font-['DejaVu_Sans',sans-serif] text-[31px] leading-9 font-bold text-transparent [-webkit-text-stroke:1px_#9a94e0] ${ch === ":" ? "w-[13px]" : "w-[26px]"}`}>
                  {ch}
                </span>
              ))}
            </div>
          </div>
        </section>

        <section className="border-r border-b border-l border-[#4a5560] bg-[#d9e5f2] pr-[7px] pb-[7px] pl-[7px]">
          <header className="flex h-[21px] items-center gap-1 bg-linear-to-b from-[#c2d0e1] to-[#d9e5f2] pl-[2px] pr-[2px] pb-[1px]">
            <TitleIcon />
            <h2 className="text-[15px] leading-4 whitespace-nowrap text-[#9aa0a8]">Сургнфгз-п График цены и объёма - [4 часа]</h2>
            <Buttons cls="h-[18px] rounded-sm" />
          </header>
          <div className={BODY}>
            <RightPrice />
            <Legend rows={[
              [["#c01818", "Сургнфгз-п [Price]"], ["#e87850", "Сургнфгз-п [*priceAvgProfile]"], ["#ffffff", "Сургнфгз-п [*zz_algo]"]],
              [["#c878d0", "Сургнфгз-п [Zig-Zag Pointer RefreshMode https://daytradingschool"]],
            ]} />
            <Divider />
            <RightStochastic />
            <Legend rows={[[["#c82018", "Сургнфгз-п [*DinapoliStochastic]"]]]} />
            <DateAxis box="941 781 930 37" x1={1007.5} x2={1805} y={782.5} label="Даты" closed
              days={[[1049, "12"], [1092, "19"], [1141, "28"], [1184, "5"], [1231, "14"], [1274, "21"], [1317, "28"], [1364, "12"], [1407, "19"], [1450, "26"], [1494, "2"], [1537, "9"], [1586, "18"], [1634, "26"], [1677, "5"], [1726, "14"], [1769, "23"]]}
              months={[[1156, "Dec"], [1336, "2026"], [1489, "Feb"], [1652, "Mar"]]} />
          </div>
          <div className="flex h-[13px] items-center justify-end bg-[#f0f0f0] pr-[17px]">
            <div className="h-px w-[159px] bg-[#868686]" />
          </div>
        </section>
      </main>
    </div>
  );
}
